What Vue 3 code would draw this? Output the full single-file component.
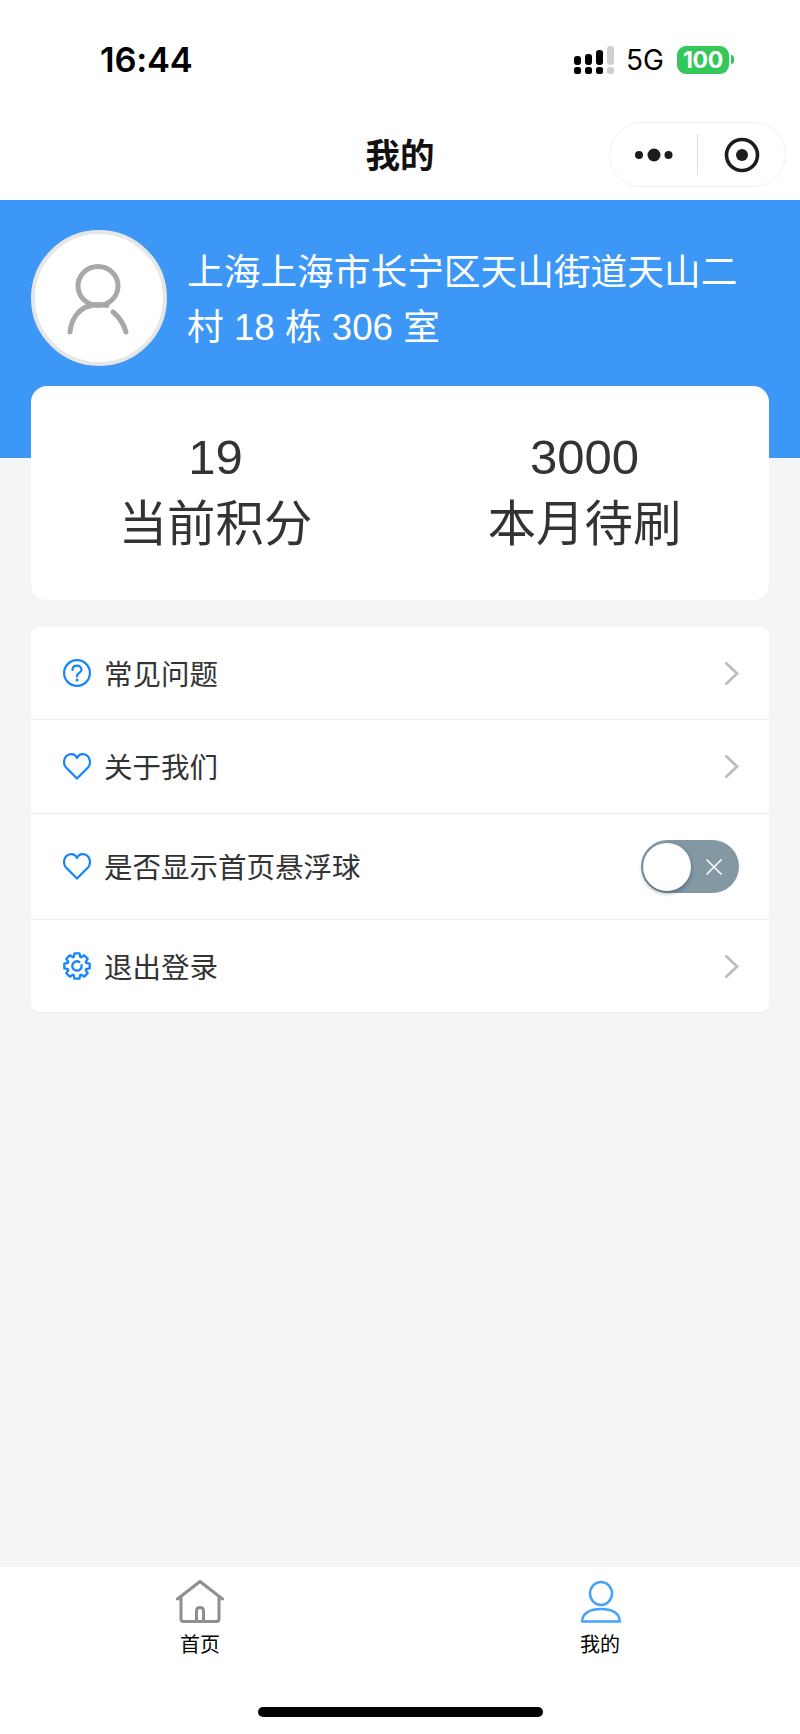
<script setup>
const stats = [
  { value: '19', label: '当前积分' },
  { value: '3000', label: '本月待刷' },
]

const gearPath = (() => {
  const c = 14
  const outer = 12.9
  const inner = 9.7
  const points = []
  for (let i = 0; i < 8; i++) {
    const a = (i * Math.PI) / 4 - Math.PI / 2
    const teeth = [
      [inner, a - 0.34],
      [outer, a - 0.19],
      [outer, a + 0.19],
      [inner, a + 0.34],
    ]
    teeth.forEach(([r, t]) => {
      points.push(`${(c + r * Math.cos(t)).toFixed(2)} ${(c + r * Math.sin(t)).toFixed(2)}`)
    })
  }
  return `M${points.join(' L')} Z`
})()
</script>

<template>
  <div class="page">
    <div class="status">
      <span class="time">16:44</span>
      <div class="status-right">
        <svg class="signal" width="40" height="28" viewBox="0 0 40 28">
          <g fill="#000">
            <rect x="0" y="10" width="7" height="9" rx="3"/>
            <rect x="0" y="21" width="7" height="7" rx="2.500"/>
            <rect x="11" y="8" width="7" height="11" rx="3"/>
            <rect x="11" y="21" width="7" height="7" rx="2.500"/>
            <rect x="22" y="4" width="7" height="15" rx="3"/>
            <rect x="22" y="21" width="7" height="7" rx="2.500"/>
          </g>
          <g fill="#cfcfcf">
            <rect x="33" y="0" width="7" height="19" rx="3"/>
            <rect x="33" y="21" width="7" height="7" rx="2.500"/>
          </g>
        </svg>
        <span class="net">5G</span>
        <div class="battery"><span class="battery-level">100</span></div>
        <span class="battery-nub"></span>
      </div>
    </div>

    <div class="nav">
      <span class="nav-title">我的</span>
      <div class="capsule">
        <svg width="40" height="16" viewBox="0 0 40 16" class="capsule-dots">
          <g fill="#1c1c1c">
            <circle cx="5" cy="8" r="4"/>
            <circle cx="20" cy="8" r="6.500"/>
            <circle cx="34.500" cy="8" r="4"/>
          </g>
        </svg>
        <span class="capsule-line"></span>
        <svg width="36" height="36" viewBox="0 0 36 36" class="capsule-target">
          <circle cx="18" cy="18" r="15.500" fill="none" stroke="#1c1c1c" stroke-width="3.600"/>
          <circle cx="18" cy="18" r="6" fill="#1c1c1c"/>
        </svg>
      </div>
    </div>

    <div class="hero">
      <div class="avatar">
        <svg class="avatar-icon" width="66" height="74" viewBox="0 0 66 74" fill="none" stroke="#a8a8a8" stroke-width="5" stroke-linecap="round">
          <ellipse cx="33" cy="25" rx="20" ry="19.500"/>
          <path d="M24 45 C 13 48 6 59 5 71"/>
          <path d="M24 45 Q 33 42.500 42 44.500"/>
          <path d="M48 51 C 54 56 59 64 61 71"/>
        </svg>
      </div>
      <div class="address">上海上海市长宁区天山街道天山二村 18 栋 306 室</div>
    </div>

    <main class="main">
      <section class="stats">
        <div v-for="s in stats" :key="s.label" class="stat">
          <div class="stat-value">{{ s.value }}</div>
          <div class="stat-label">{{ s.label }}</div>
        </div>
      </section>

      <section class="list">
        <div class="row row-first">
          <svg class="row-icon" width="28" height="28" viewBox="0 0 28 28" fill="none" stroke="#1684fc" stroke-width="2.200">
            <circle cx="14" cy="14" r="12.900"/>
            <path d="M9.500 11 C 9.500 8 11.500 6.700 14 6.700 C 16.500 6.700 18.500 8.300 18.500 10.700 C 18.500 13.800 14 13.700 14 17.400" stroke-linecap="round"/>
            <circle cx="14" cy="21" r="1.500" fill="#1684fc" stroke="none"/>
          </svg>
          <span class="row-text">常见问题</span>
          <svg class="chevron" width="15" height="25" viewBox="0 0 15 25" fill="none" stroke="#bdbdbd" stroke-width="2.800">
            <path d="M1.500 1.500 L13 12.500 L1.500 23.500"/>
          </svg>
        </div>
        <div class="row row-second">
          <svg class="row-icon" width="28" height="27" viewBox="0 0 28 27" fill="none" stroke="#1684fc" stroke-width="2.200" stroke-linejoin="round">
            <path d="M14 25.500 L3 14.500 C -0.500 10.500 1 3 6 1.500 C 9.500 0.500 12.500 2 14 5 C 15.500 2 18.500 0.500 22 1.500 C 27 3 28.500 10.500 25 14.500 Z"/>
          </svg>
          <span class="row-text">关于我们</span>
          <svg class="chevron" width="15" height="25" viewBox="0 0 15 25" fill="none" stroke="#bdbdbd" stroke-width="2.800">
            <path d="M1.500 1.500 L13 12.500 L1.500 23.500"/>
          </svg>
        </div>
        <div class="row row-switch">
          <svg class="row-icon" width="28" height="27" viewBox="0 0 28 27" fill="none" stroke="#1684fc" stroke-width="2.200" stroke-linejoin="round">
            <path d="M14 25.500 L3 14.500 C -0.500 10.500 1 3 6 1.500 C 9.500 0.500 12.500 2 14 5 C 15.500 2 18.500 0.500 22 1.500 C 27 3 28.500 10.500 25 14.500 Z"/>
          </svg>
          <span class="row-text">是否显示首页悬浮球</span>
          <div class="toggle">
            <span class="knob"></span>
            <svg class="toggle-x" width="18" height="18" viewBox="0 0 18 18" stroke="#fff" stroke-width="1.500">
              <path d="M1.500 1.500 L16.500 16.500 M16.500 1.500 L1.500 16.500"/>
            </svg>
          </div>
        </div>
        <div class="row row-last">
          <svg class="row-icon" width="28" height="28" viewBox="0 0 28 28" fill="none" stroke="#1684fc" stroke-width="2.300" stroke-linejoin="round">
            <path :d="gearPath"/>
            <path d="M18.600 13.200 A 4.700 4.700 0 1 1 16.350 9.930" stroke-linecap="round"/>
          </svg>
          <span class="row-text">退出登录</span>
          <svg class="chevron" width="15" height="25" viewBox="0 0 15 25" fill="none" stroke="#bdbdbd" stroke-width="2.800">
            <path d="M1.500 1.500 L13 12.500 L1.500 23.500"/>
          </svg>
        </div>
      </section>
    </main>

    <nav class="tabbar">
      <div class="tabs">
        <div class="tab">
          <svg width="48" height="43" viewBox="0 0 48 43" fill="none" stroke="#8f8f8f" stroke-width="3" stroke-linejoin="round" stroke-linecap="round">
            <path d="M1.500 19 L24 1.500 L46.500 19"/>
            <path d="M5 16.500 V39 Q5 41.500 7.500 41.500 H40.500 Q43 41.500 43 39 V16.500"/>
            <path d="M20.500 41 V31 Q20.500 27.500 24 27.500 Q27.500 27.500 27.500 31 V41"/>
          </svg>
          <span class="tab-text">首页</span>
        </div>
        <div class="tab">
          <svg class="me-icon" width="40" height="43" viewBox="0 0 40 43" fill="none" stroke="#45a1fb" stroke-width="2.400">
            <ellipse cx="20" cy="13.500" rx="11" ry="11.500"/>
            <path d="M1.200 41.500 C 1.200 32.500 10 29 20 29 C 30 29 38.800 32.500 38.800 41.500 Z" stroke-linejoin="round"/>
          </svg>
          <span class="tab-text">我的</span>
        </div>
      </div>
      <div class="home-bar"></div>
    </nav>
  </div>
</template>

<style scoped>
.page {
  width: 800px;
  height: 1734px;
  display: flex;
  flex-direction: column;
  background: #f4f5f7;
  font-family: "Liberation Sans", "Noto Sans CJK SC", sans-serif;
  overflow: hidden;
}
.status {
  height: 100px;
  flex: none;
  background: #fff;
  display: flex;
  align-items: center;
  justify-content: space-between;
  padding: 19px 66px 0 100px;
  box-sizing: border-box;
  color: #000;
}
.time {
  font-family: Inter, sans-serif;
  font-size: 34.500px;
  font-weight: 600;
  letter-spacing: -0.2px;
  line-height: 40px;
}
.status-right {
  display: flex;
  align-items: center;
}
.signal {
  display: block;
}
.net {
  font-family: Inter, sans-serif;
  font-size: 28px;
  margin-left: 12px;
  line-height: 28px;
}
.battery {
  width: 52px;
  height: 28px;
  border-radius: 9px;
  margin-left: 13px;
  background: #34c759;
  display: flex;
  align-items: center;
  justify-content: center;
}
.battery-level {
  font-family: Inter, sans-serif;
  color: #fff;
  font-size: 23px;
  font-weight: 700;
  line-height: 28px;
  letter-spacing: -0.3px;
}
.battery-nub {
  width: 3px;
  height: 9px;
  margin-left: 2px;
  background: #34c759;
  border-radius: 0 3px 3px 0;
}
.nav {
  height: 100px;
  flex: none;
  background: #fff;
  position: relative;
  display: flex;
  align-items: center;
  justify-content: center;
}
.nav-title {
  font-size: 34.500px;
  font-weight: 700;
  color: #111;
  line-height: 44px;
  margin-top: 11px;
}
.capsule {
  position: absolute;
  left: 609px;
  top: 22px;
  width: 177px;
  height: 65px;
  box-sizing: border-box;
  border: 1px solid #efefef;
  border-radius: 33px;
  background: #fff;
  display: flex;
  align-items: center;
}
.capsule-dots {
  margin-left: 24px;
}
.capsule-line {
  width: 1px;
  height: 41px;
  background: #dedede;
  margin-left: 23px;
}
.capsule-target {
  margin-left: 26px;
}
.hero {
  height: 258px;
  flex: none;
  background: #3d97f6;
  box-sizing: border-box;
  padding: 30px 50px 0 31px;
  display: flex;
  align-items: flex-start;
  gap: 20px;
}
.avatar {
  width: 136px;
  height: 136px;
  flex: none;
  box-sizing: border-box;
  border: 4px solid #e6e6e6;
  border-radius: 50%;
  background: #fff;
  display: flex;
  align-items: center;
  justify-content: center;
}
.avatar-icon {
  margin-left: -2px;
}
.address {
  margin-top: 15px;
  color: #fff;
  font-size: 36.700px;
  line-height: 55px;
}
.main {
  flex: 1;
  margin-top: -72px;
  padding: 0 31px;
  display: flex;
  flex-direction: column;
  gap: 27px;
}
.stats {
  height: 214px;
  background: #fff;
  border-radius: 16px;
  display: grid;
  grid-template-columns: 1fr 1fr;
  padding-top: 38px;
  box-sizing: border-box;
}
.stat {
  text-align: center;
  color: #333;
}
.stat-value {
  font-size: 49px;
  line-height: 66px;
}
.stat-label {
  font-size: 48.400px;
  line-height: 68px;
}
.list {
  background: #fff;
  border-radius: 8px;
  box-shadow: 0 1px 2px rgba(0, 0, 0, 0.04);
}
.row {
  display: flex;
  align-items: center;
  padding: 0 30px 0 32px;
  box-sizing: border-box;
  border-bottom: 1px solid #e9ecee;
}
.row-first {
  height: 93px;
}
.row-second {
  height: 94px;
}
.row-switch {
  height: 106px;
}
.row-last {
  height: 92px;
  border-bottom: none;
}
.row-icon {
  flex: none;
  display: block;
}
.row-text {
  margin: 3px 0 0 13px;
  flex: 1;
  font-size: 28.500px;
  line-height: 40px;
  color: #333;
}
.chevron {
  flex: none;
}
.toggle {
  position: relative;
  width: 98px;
  height: 53px;
  flex: none;
  border-radius: 27px;
  background: #8498a4;
}
.knob {
  position: absolute;
  left: 2px;
  top: 3px;
  width: 48px;
  height: 48px;
  border-radius: 50%;
  background: #fff;
  box-shadow: 0 2px 4px rgba(40, 60, 75, 0.55);
}
.toggle-x {
  position: absolute;
  left: 64px;
  top: 18px;
}
.tabbar {
  height: 167px;
  flex: none;
  background: #fff;
  position: relative;
}
.tabs {
  display: grid;
  grid-template-columns: 1fr 1fr;
  padding-top: 13px;
}
.tab {
  display: flex;
  flex-direction: column;
  align-items: center;
}
.me-icon {
  margin-left: 2px;
}
.tab-text {
  font-size: 20px;
  line-height: 26px;
  color: #000;
  margin-top: 9px;
}
.home-bar {
  position: absolute;
  left: 258px;
  top: 140px;
  width: 285px;
  height: 10px;
  border-radius: 5px;
  background: #000;
}
</style>

<style>
html, body {
  margin: 0;
  background: #fff;
}
</style>
